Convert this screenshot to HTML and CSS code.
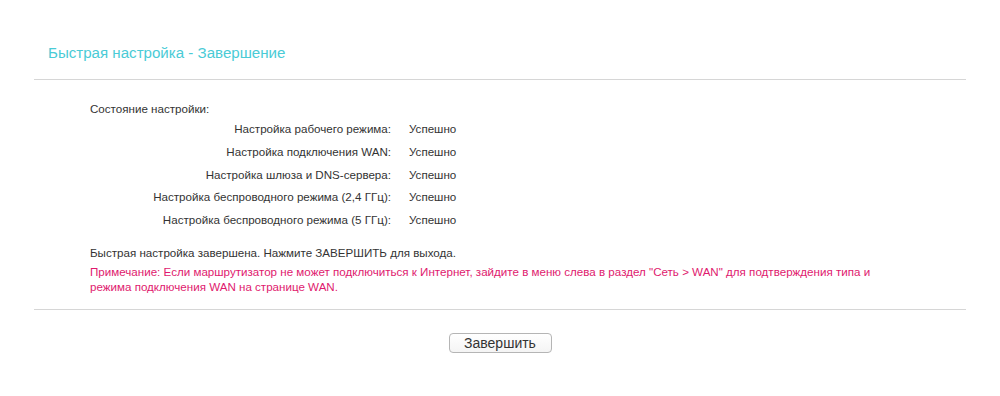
FILE: index.html
```html
<!DOCTYPE html>
<html lang="ru">

<head>
    <meta charset="UTF-8">
    <title>Быстрая настройка - Завершение</title>
    <link rel="stylesheet" href="styles.css">
</head>

<body>
    <div class="page">
        <!-- заголовок -->
        <h2 class="title">Быстрая настройка - Завершение</h2>
        <hr class="line">

        <div class="content">
            <p class="status-head">Состояние настройки:</p>
            <div class="status-table">
                <div class="label">Настройка рабочего режима:</div>
                <div class="value">Успешно</div>
                <div class="label">Настройка подключения WAN:</div>
                <div class="value">Успешно</div>
                <div class="label">Настройка шлюза и DNS-сервера:</div>
                <div class="value">Успешно</div>
                <div class="label">Настройка беспроводного режима (2,4 ГГц):</div>
                <div class="value">Успешно</div>
                <div class="label">Настройка беспроводного режима (5 ГГц):</div>
                <div class="value">Успешно</div>
            </div>

            <p class="done">Быстрая настройка завершена. Нажмите ЗАВЕРШИТЬ для выхода.</p>
            <p class="note">Примечание: Если маршрутизатор не может подключиться к Интернет, зайдите в меню слева в раздел "Сеть &gt; WAN" для подтверждения типа и режима подключения WAN на странице WAN.</p>
        </div>

        <hr class="line line-bottom">

        <div class="actions">
            <button class="btn">Завершить</button>
        </div>
    </div>
</body>

</html>
```

FILE: styles.css
```css
/* pagina */
body {
    margin: 0;
    background: #ffffff;
    font-family: 'Liberation Sans', Arial, sans-serif;
    color: #333333;
}

.page {
    padding: 0 34px 0 34px;
}

/* titolo */
.title {
    margin: 0;
    padding: 44px 0 0 14px;
    font-size: 15.1px;
    font-weight: normal;
    line-height: 18px;
    color: #4acbd6;
}

.line {
    margin: 17px 0 0 0;
    border: none;
    border-top: 1px solid #d6d6d6;
    height: 0;
}

.line-bottom {
    margin-top: 15px;
}

.content {
    padding: 21px 0 0 56px;
    font-size: 11.6px;
    line-height: 15px;
}

.status-head {
    margin: 0;
}

/* tabella stato */
.status-table {
    display: grid;
    grid-template-columns: 301px auto;
    column-gap: 18px;
    row-gap: 7.75px;
    margin-top: 5px;
}

.label {
    text-align: right;
}

.done {
    margin: 18px 0 0 0;
}

.note {
    margin: 4px 0 0 0;
    color: #e0196e;
    max-width: 800px;
}

/* bottone */
.actions {
    display: flex;
    justify-content: center;
    padding-top: 23px;
}

.btn {
    width: 103px;
    height: 20px;
    padding: 0;
    border: 1px solid #b5b5b5;
    border-radius: 4px;
    background: linear-gradient(#ffffff, #f4f4f4);
    font-family: 'Liberation Sans', Arial, sans-serif;
    font-size: 14px;
    color: #333333;
    cursor: pointer;
}
```
